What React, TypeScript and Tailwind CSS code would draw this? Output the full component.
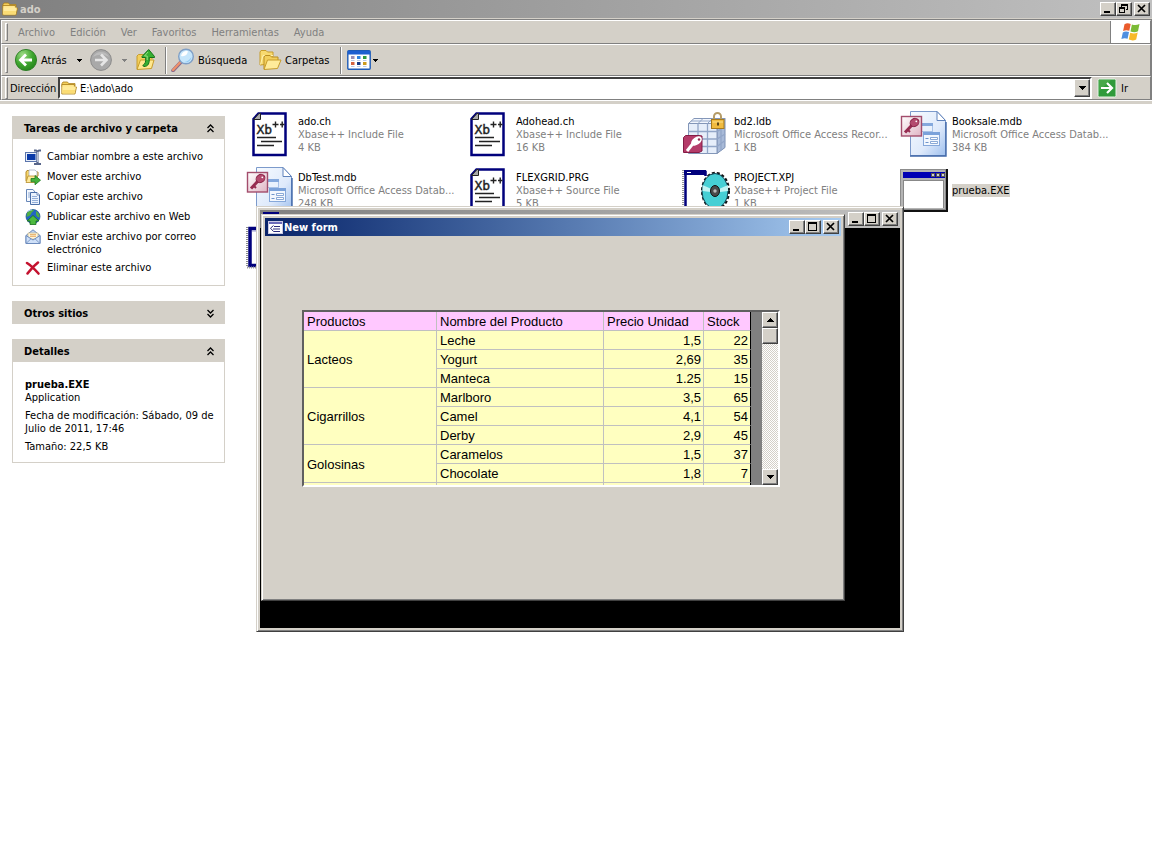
import React from 'react';

/* ---------- icons ---------- */

function FolderIcon({ className = 'h-4 w-4' }: { className?: string }) {
  return (
    <svg viewBox="0 0 16 16" className={className} aria-hidden="true">
      <path d="M1 3.500 2 2h4.500l1.200 1.600H14v3H1z" fill="#f3cf5c" stroke="#a87c18" strokeWidth=".8" />
      <path d="M.8 14V4.500h12.600V7H15.500L14 14z" fill="#ffe68c" stroke="#a87c18" strokeWidth=".8" />
      <path d="M1.500 6.500h13.200L13.400 13.300H1.500z" fill="#ffeb9c" />
      <path d="M1.500 10h12.600l-.7 3.300H1.500z" fill="#fbdc74" />
    </svg>
  );
}

function BackIcon() {
  return (
    <svg viewBox="0 0 24 24" className="h-6 w-6" aria-hidden="true">
      <defs>
        <radialGradient id="back-fill" cx=".35" cy=".25" r=".9">
          <stop offset="0" stopColor="#9fdc87" />
          <stop offset=".5" stopColor="#3fa62f" />
          <stop offset="1" stopColor="#1d7a16" />
        </radialGradient>
      </defs>
      <circle cx="12" cy="12" r="10.600" fill="url(#back-fill)" stroke="#2c7c25" strokeWidth=".9" />
      <path d="M18 12H7M12 6.500 6.500 12l5.500 5.500" fill="none" stroke="#fff" strokeWidth="2.800" />
    </svg>
  );
}

function ForwardIcon() {
  return (
    <svg viewBox="0 0 24 24" className="h-6 w-6" aria-hidden="true">
      <circle cx="12" cy="12" r="10.400" fill="#a9a9a9" stroke="#8b8b8b" />
      <path d="M4 9a9 9 0 0 1 16 0C15 6 9 6 4 9z" fill="#bcbcbc" />
      <path d="M6 12h11M12 6.500 17.500 12 12 17.500" fill="none" stroke="#e6e6e6" strokeWidth="2.600" />
    </svg>
  );
}

function UpFolderIcon() {
  return (
    <svg viewBox="0 0 22 24" className="h-6 w-[22px]" aria-hidden="true">
      <path d="M2 21V8l1.500-1.500h5L10 8h7v3" fill="#f3cf5c" stroke="#c79c2b" />
      <path d="m2 21.500 3.500-9.500h13.500L16.500 20.500z" fill="#ffe88f" stroke="#c79c2b" />
      <path d="M9 18.500c4.500 0 5.500-3.500 5.300-9H19.500v-1L13.700 1.500 7 8.500v1h3.700c.2 4-.2 6.500-3 8z" fill="#36b032" stroke="#14711a" />
      <path d="m13 4-3.500 4h2.700v4" fill="none" stroke="#95e07f" />
    </svg>
  );
}

function SearchIcon() {
  return (
    <svg viewBox="0 0 24 24" className="h-6 w-6" aria-hidden="true">
      <path d="m9.500 14.500-7.500 8" stroke="#8b6a8a" strokeWidth="3.600" strokeLinecap="round" />
      <path d="m9 14.500-7 7.500" stroke="#f0926a" strokeWidth="2.200" strokeLinecap="round" />
      <circle cx="15" cy="8.500" r="7.300" fill="#c6e6fb" stroke="#7f9fc6" strokeWidth="1.400" />
      <path d="M10 8a5.500 5.500 0 0 1 7-4.700c-1 4-3 5.500-7 4.700z" fill="#fff" />
      <path d="M20.500 9a5.500 5.500 0 0 1-7 5c3-.5 5-2 7-5z" fill="#8ec8f2" />
    </svg>
  );
}

function FoldersIcon() {
  return (
    <svg viewBox="0 0 24 24" className="h-6 w-6" aria-hidden="true">
      <path d="M2 17V4l1-1.500h5L9.500 4H15v4l-3 8z" fill="#f8da70" stroke="#c79c2b" />
      <path d="M2.500 16.500 5 7.500h10" fill="none" stroke="#fff2b0" />
      <path d="M6 21V9l1.200-1.500h5L13.500 9H20v3" fill="#f3cf5c" stroke="#b98e22" />
      <path d="m6 21.500 3.500-9.500H23l-3.500 8.500z" fill="#ffeb9a" stroke="#c79c2b" />
    </svg>
  );
}

function ViewsIcon() {
  return (
    <svg viewBox="0 0 24 20" className="h-5 w-6" aria-hidden="true">
      <rect x=".8" y=".8" width="22.400" height="18.400" rx="1" fill="#fff" stroke="#1d5bb8" strokeWidth="1.400" />
      <rect x="1" y="1" width="22" height="3.500" fill="#1d5fd0" />
      <rect x="4" y="6" width="3.500" height="3" fill="#9b8fb5" />
      <rect x="10" y="6" width="3.500" height="3" fill="#2f83e0" />
      <rect x="16" y="6" width="3.500" height="3" fill="#2f9a3e" />
      <rect x="4" y="12" width="3.500" height="3" fill="#d3623e" />
      <rect x="10" y="12" width="3.500" height="3" fill="#163a86" />
      <rect x="16" y="12" width="3.500" height="3" fill="#cc9a1e" />
      <path d="M4 10.500h3.500M10 10.500h3.500M16 10.500h3.500M4 16.500h3.500M10 16.500h3.500M16 16.500h3.500" stroke="#bccbe4" />
    </svg>
  );
}

function GoIcon() {
  return (
    <svg viewBox="0 0 20 20" className="h-5 w-5" aria-hidden="true">
      <rect x="1" y="1" width="18" height="18" rx="1.500" fill="#2f9a3a" stroke="#e8f3e6" />
      <path d="M2 2h12L2 13z" fill="#46a849" />
      <path d="M4 10h10M10 5l5 5-5 5" fill="none" stroke="#fff" strokeWidth="2.200" />
    </svg>
  );
}

function WindowsFlag() {
  return (
    <svg viewBox="0 0 22 20" className="h-5 w-[22px]" aria-hidden="true">
      <path d="M4.500 2.200c2-1.400 4-1.300 6.200-.3L9.300 8.800c-2-.8-4-.8-6.200.3z" fill="#ea5b2c" />
      <path d="M11.900 2.400c2.600 1 4.600 1 7.600-.4L18 9.200c-2.600 1.300-4.700 1.200-7.500.2z" fill="#7cbb36" />
      <path d="M2.800 10.400c2-1.200 4-1.200 6.200-.3l-1.400 6.700c-2-.8-4-.8-6.200.3z" fill="#4f8fe0" />
      <path d="M10.200 10.700c2.700 1 4.700 1 7.500-.2l-1.500 7c-2.600 1.200-4.600 1.100-7.400.1z" fill="#f7b92a" />
    </svg>
  );
}

function Triangle({ up = false }: { up?: boolean }) {
  return (
    <svg viewBox="0 0 7 4" className="h-1 w-[7px]" shapeRendering="crispEdges" aria-hidden="true">
      <path d={up ? 'M3 0h1v1h1v1h1v1h1v1H0V3h1V2h1V1h1z' : 'M0 0h7v1H6v1H5v1H4v1H3V3H2V2H1V1H0z'} fill="#000" />
    </svg>
  );
}

function SmallTriangle({ color = '#000' }: { color?: string }) {
  return (
    <svg viewBox="0 0 5 3" className="h-[3px] w-[5px]" shapeRendering="crispEdges" aria-hidden="true">
      <path d="M0 0h5v1H4v1H3v1H2V2H1V1H0z" fill={color} />
    </svg>
  );
}

function Chevrons({ down = false }: { down?: boolean }) {
  return (
    <svg viewBox="0 0 9 9" className="h-[9px] w-[9px]" aria-hidden="true">
      <path
        d={down ? 'M1.500 1l3 3 3-3M1.500 5l3 3 3-3' : 'M1.500 4l3-3 3 3M1.500 8l3-3 3 3'}
        fill="none"
        stroke="#000"
        strokeWidth="1.300"
      />
    </svg>
  );
}

function RenameIcon() {
  return (
    <svg viewBox="0 0 16 16" className="h-4 w-4" aria-hidden="true">
      <rect x=".5" y="3.500" width="11.500" height="9" fill="#e8eef8" stroke="#5b76ad" />
      <rect x="2" y="5" width="8.500" height="6" fill="#0a3aa8" />
      <path d="M9 1.500h2l1.500 1 1.500-1H16M12.500 2.500v11M9 15h2l1.500-1 1.500 1H16" fill="none" stroke="#56658a" strokeWidth="2" />
      <path d="M12.500 3v10" stroke="#cfd8ea" strokeWidth=".8" />
    </svg>
  );
}

function MoveIcon() {
  return (
    <svg viewBox="0 0 16 16" className="h-4 w-4" aria-hidden="true">
      <path d="M1 12V3l1-1.500h4L7.500 3H13v4" fill="#f6d468" stroke="#b48b2a" />
      <path d="M4 1h6l2 2v6H4z" fill="#fff" stroke="#a7b1c4" strokeWidth=".8" />
      <path d="M1 13.500 3 7h9.500L11 13.500z" fill="#ffe99a" stroke="#b48b2a" strokeWidth=".8" />
      <path d="M6 9.500h4V6.500l5.500 4.700L10 15.800v-3H6z" fill="#45b23b" stroke="#1b7a1e" strokeWidth=".8" />
    </svg>
  );
}

function CopyIcon() {
  return (
    <svg viewBox="0 0 16 16" className="h-4 w-4" aria-hidden="true">
      <path d="M1.500.5H8L10 3v9.500H1.500z" fill="#f5f9ff" stroke="#6787b8" />
      <path d="M3 4h3M3 6h3M3 8h3" stroke="#90abd4" />
      <path d="M5.500 3.500H12L14.500 6v9.500h-9z" fill="#eaf2fd" stroke="#4b6fa8" />
      <path d="M12 3.500V6h2.500" fill="#fff" stroke="#4b6fa8" strokeWidth=".8" />
      <path d="M7 7.500h5M7 9.500h6M7 11.500h6M7 13.500h6" stroke="#7c9cce" strokeWidth=".8" />
    </svg>
  );
}

function PublishIcon() {
  return (
    <svg viewBox="0 0 16 16" className="h-4 w-4" aria-hidden="true">
      <circle cx="8" cy="7.500" r="7" fill="#2265c4" stroke="#164a8f" strokeWidth=".7" />
      <path d="M2 4c2-3 5-3.500 7-3-1 2-2.500 2-3 4-1 2-3 2-4.500 3zM11 2c2 1 3.500 3 3.700 6-2 1-3-1-3.700-2.500z" fill="#4fae45" />
      <path d="M3 2.500c1-1 3-1.700 4-1.500" stroke="#a9d3f7" fill="none" />
      <path d="M8 6.500 14 12h-3v3.500H5V12H2z" fill="#4cba3f" stroke="#17701c" strokeWidth=".8" />
    </svg>
  );
}

function MailIcon() {
  return (
    <svg viewBox="0 0 16 16" className="h-4 w-4" aria-hidden="true">
      <path d="M1 6.500 8 .8l7 5.700v8H1z" fill="#bcd3f2" stroke="#6c8bbd" />
      <path d="M3 4h10v6H3z" fill="#fff6dc" stroke="#c8b582" strokeWidth=".7" />
      <path d="M5 5.700h6M5 7.300h6" stroke="#e6a95f" />
      <path d="M1 6.500 8 11l7-4.500v8H1z" fill="#cfe0f8" stroke="#6c8bbd" />
      <path d="m1 14.500 5-4.700M15 14.500l-5-4.700" stroke="#6c8bbd" strokeWidth=".8" />
    </svg>
  );
}

function DeleteIcon() {
  return (
    <svg viewBox="0 0 16 16" className="h-4 w-4" aria-hidden="true">
      <path d="M2 3c4 2.500 7.500 6 11.500 10.500M13 2.500C9 5.500 5.500 9.500 2.500 13.500" fill="none" stroke="#c4122f" strokeWidth="2.600" strokeLinecap="round" />
    </svg>
  );
}

/* ---------- file type icons, 48px ---------- */

function XbaseIcon() {
  return (
    <svg viewBox="0 0 48 48" className="h-12 w-12" aria-hidden="true">
      <path d="M12.500 3.500h27v41.500H7.500V9z" fill="#fff" stroke="#00007c" strokeWidth="2.500" />
      <path d="M7.500 9.500 13 3.500h1.500v6z" fill="#a8a8a8" stroke="#222" />
      <text x="10.500" y="24" fontFamily="DejaVu Sans Mono, monospace" fontSize="13" stroke="#222" strokeWidth=".4" fill="#222">
        Xb
      </text>
      <path d="M26.500 14.500h6M29.500 11.500v6M34 14.500h4.500M36.200 11.500v6" stroke="#222" strokeWidth="1.400" />
      <path d="M11 27.500h19M15 31.500h21M11 35.500h17" stroke="#222" strokeWidth="1.400" />
    </svg>
  );
}

function AccessIcon() {
  return (
    <svg viewBox="0 0 48 48" className="h-12 w-12" aria-hidden="true">
      <defs>
        <linearGradient id="access-page" x1="0" y1="0" x2="1" y2="1">
          <stop offset="0" stopColor="#f7fbff" />
          <stop offset=".6" stopColor="#dfeafb" />
          <stop offset="1" stopColor="#9fc0ee" />
        </linearGradient>
        <linearGradient id="access-key" x1="0" y1="0" x2="1" y2="1">
          <stop offset="0" stopColor="#fff" />
          <stop offset="1" stopColor="#dfb4c4" />
        </linearGradient>
      </defs>
      <path d="M10.500 1.500H37l8.500 9v35h-35z" fill="url(#access-page)" stroke="#7c9acb" />
      <path d="M37 1.500v9h8.500z" fill="#fff" stroke="#5f82bb" />
      <path d="M10 46h36V12" fill="none" stroke="#3f67a8" strokeWidth="1.400" />
      <rect x="20.500" y="13.500" width="12" height="8" fill="#eaf2fd" stroke="#a9c2e7" />
      <path d="M20 14.500h13" stroke="#85a9dd" strokeWidth="3" />
      <rect x="23.500" y="22.500" width="16" height="13" fill="#f2f7fe" stroke="#86a8da" />
      <path d="M23 23.500h17" stroke="#7ba2da" strokeWidth="3" />
      <path d="M25.500 28.500h3M25.500 32.500h3" stroke="#6f94cb" />
      <path d="M30.500 27.500h7v2h-7zM30.500 31.500h7v2h-7z" fill="#fff" stroke="#6f94cb" strokeWidth=".8" />
      <rect x="1.500" y="6.500" width="20" height="19.500" fill="url(#access-key)" stroke="#a34d6c" strokeWidth="1.400" />
      <path d="m13 14-8 8.500" stroke="#962b50" strokeWidth="3" />
      <path d="m8 20 2 2" stroke="#962b50" strokeWidth="2" />
      <ellipse cx="14.500" cy="12.500" rx="4.600" ry="3.900" fill="#b44a6e" stroke="#8b2347" transform="rotate(-35 14.500 12.500)" />
      <circle cx="16.300" cy="11.300" r=".9" fill="#fff" />
    </svg>
  );
}

function AccessLockIcon() {
  return (
    <svg viewBox="0 0 48 48" className="h-12 w-12" aria-hidden="true">
      <path d="M6.500 13.500 12 8.500h31l-4 5z" fill="#f2f6fd" stroke="#8396b8" />
      <path d="M35 13.500 43 8.500v29l-8 6z" fill="#a8bad8" stroke="#7c90b4" />
      <path d="M6.500 13.500H35v30H6.500z" fill="#e6eefa" stroke="#8396b8" />
      <path d="M16 13.500v30M25.500 13.500v30M39 11.500v29M6.500 21.500H35l8-5M6.500 29H35l8-5M6.500 36.500H35l8-6" fill="none" stroke="#92a6c8" strokeWidth="1.300" />
      <path d="m16 13.500 5-5M25.500 13.500l5-5M9 11h29" stroke="#92a6c8" />
      <path d="M32 11V6.500a3.500 3.500 0 0 1 7 0V11" fill="none" stroke="#b59c68" strokeWidth="2" />
      <rect x="29.500" y="9.500" width="12.500" height="9" fill="#f0bb3f" stroke="#a87b1c" />
      <path d="M30.500 12h10.500" stroke="#fbe08d" />
      <path d="M36 12.500v3" stroke="#4c3a10" strokeWidth="1.800" />
      <path d="M3.500 25.500H17l3 .5v15l-3 1.500H1.500v-15z" fill="#b43b69" stroke="#841c45" />
      <path d="m13 31-8 10" stroke="#fff" strokeWidth="3" />
      <ellipse cx="14.500" cy="31" rx="6" ry="3.800" fill="#fff" transform="rotate(-35 14.500 31)" />
      <circle cx="17" cy="29.500" r="1.200" fill="#962b50" />
    </svg>
  );
}

function ProjectIcon() {
  return (
    <svg viewBox="0 0 48 48" className="h-12 w-12" aria-hidden="true">
      <path d="M1 4v40" stroke="#9a9a9a" strokeWidth="2" strokeDasharray="1 1" />
      <path d="M3.500 6h20v38h-20z" fill="#fff" stroke="#00007c" strokeWidth="2.500" />
      <path d="M22 10h5v30h-5z" fill="#fff" />
      <path d="M2 6.500h22" stroke="#00007c" strokeWidth="5" />
      <path d="M5 6.500h4" stroke="#fff" />
      <ellipse cx="33.500" cy="25" rx="13.300" ry="18" fill="none" stroke="#111" strokeWidth="2.400" strokeDasharray="3 2" />
      <ellipse cx="33" cy="25" rx="13" ry="17.500" fill="#46cfd4" stroke="#114455" />
      <path d="m20.500 19 9 4-1 3-8-1zM46 19l-9 4 1 3 8-1z" fill="#bff3f3" />
      <ellipse cx="33" cy="25" rx="4.500" ry="5.500" fill="#4a4a4a" stroke="#111" />
      <circle cx="33" cy="25" r="1.700" fill="#b9b9b9" />
    </svg>
  );
}

function ExeIcon() {
  return (
    <svg viewBox="0 0 48 48" className="h-12 w-12" shapeRendering="crispEdges" aria-hidden="true">
      <rect x="0" y="3" width="48" height="43" fill="#111" />
      <rect x="0" y="3" width="46" height="41" fill="#8c8c8c" />
      <rect x="1" y="4" width="44" height="39" fill="#b4b4b4" />
      <rect x="3" y="6" width="42" height="6" fill="#0000b4" />
      <path d="M31 7h4v4h-4zM36 7h4v4h-4zM41 7h4v4h-4z" fill="#555" />
      <path d="M32 8h2v2h-2zM37 8h2v2h-2zM42 8h2v2h-2z" fill="#d0d0d0" />
      <rect x="3" y="14" width="41" height="28" fill="#888" />
      <rect x="4" y="15" width="39" height="27" fill="#fff" />
    </svg>
  );
}

function WindowFileIcon() {
  return (
    <svg viewBox="0 0 48 48" className="h-12 w-12" aria-hidden="true">
      <path d="M1 5v40" stroke="#8c8c8c" strokeWidth="2" strokeDasharray="1 1" />
      <path d="M4 6.500h40v37H4z" fill="#fff" stroke="#00007c" strokeWidth="3.500" />
      <path d="M6 9h5" stroke="#9a9ad0" />
      <path d="M1 45.500h44" stroke="#9a9a9a" strokeWidth="2" strokeDasharray="1 1" />
    </svg>
  );
}

function FormIcon() {
  return (
    <svg viewBox="0 0 15 13" className="h-[13px] w-[15px]" aria-hidden="true">
      <rect x=".5" y=".5" width="14" height="12" fill="#fff" stroke="#c9c9e4" />
      <path d="M1 2h13" stroke="#2b2b9c" strokeWidth="1.400" />
      <path d="M5.500 4.500 2.500 7.200l3 3.300h6.500" fill="none" stroke="#2b2b7c" />
      <path d="M6 5.500h6M5 8h7" stroke="#2b2b7c" />
    </svg>
  );
}

/* ---------- window chrome ---------- */

const RAISED =
  'border border-t-white border-l-white border-r-[#404040] border-b-[#404040] bg-[#d4d0c8] shadow-[inset_-1px_-1px_0_#808080]';

type CaptionKind = 'minimize' | 'maximize' | 'restore' | 'close';

const captionPaths: Record<CaptionKind, React.ReactNode> = {
  minimize: <path d="M3 8h6v2H3z" fill="#000" />,
  maximize: <path d="M2 1h9v9H2zM3 3v6h7V3z" fill="#000" fillRule="evenodd" />,
  restore: (
    <path d="M4 1h7v6H9V6h1V3H5v1H4zM2 4h6v6H2zM3 6v3h4V6z" fill="#000" fillRule="evenodd" />
  ),
  close: <path d="m3 2 7 7M10 2 3 9" stroke="#000" strokeWidth="1.700" />,
};

const captionLabels: Record<CaptionKind, string> = {
  minimize: 'Minimizar',
  maximize: 'Maximizar',
  restore: 'Restaurar',
  close: 'Cerrar',
};

function CaptionButton({ kind }: { kind: CaptionKind }) {
  return (
    <button type="button" aria-label={captionLabels[kind]} className={`flex h-3.5 w-4 shrink-0 ${RAISED}`}>
      <svg viewBox="0 0 14 12" className="h-3 w-3.5" aria-hidden="true">
        {captionPaths[kind]}
      </svg>
    </button>
  );
}

function CaptionButtons({ restore = false }: { restore?: boolean }) {
  return (
    <div className="ml-auto flex items-center pr-0.5">
      <CaptionButton kind="minimize" />
      <CaptionButton kind={restore ? 'restore' : 'maximize'} />
      <span className="w-0.5" />
      <CaptionButton kind="close" />
    </div>
  );
}

function Grip() {
  return <span className="h-full w-[3px] shrink-0 border border-t-white border-l-white border-r-[#808080] border-b-[#808080]" />;
}

function Separator() {
  return <span className="h-[27px] w-0.5 shrink-0 border-l border-r border-l-[#808080] border-r-white" />;
}

const BAND = 'flex items-center border border-t-white border-l-white border-r-[#808080] border-b-[#808080]';

/* ---------- explorer ---------- */

const menus = ['Archivo', 'Edición', 'Ver', 'Favoritos', 'Herramientas', 'Ayuda'];

function Explorer() {
  return (
    <header className="bg-[#d4d0c8]">
      <div className="flex h-[18px] items-center bg-linear-to-r from-[#808080] to-[#c0c0c0] pl-0.5">
        <FolderIcon />
        <h1 className="pl-0.5 text-[11px] font-bold text-[#d4d0c8]">ado</h1>
        <CaptionButtons restore />
      </div>

      <div className="mt-px border-t border-r border-l border-t-[#808080] border-r-[#808080] border-l-[#808080]">
        <div className={`${BAND} h-6`}>
          <nav className="flex h-full flex-1 items-center py-0.5 pl-[3px]">
            <Grip />
            <div className="flex items-center gap-[15px] pl-2.5 text-[#808080]">
              {menus.map((m) => (
                <button key={m} type="button">
                  {m}
                </button>
              ))}
            </div>
          </nav>
          <div className="flex h-full w-10 items-center justify-center border-l border-l-[#808080] bg-white">
            <WindowsFlag />
          </div>
        </div>

        <div className={`${BAND} h-8 py-0.5 pl-[3px]`}>
          <Grip />
          <button type="button" className="ml-1.5 flex w-[68px] shrink-0 items-center gap-[3px]">
            <BackIcon />
            Atrás
            <span className="ml-auto">
              <SmallTriangle />
            </span>
          </button>
          <button type="button" aria-label="Adelante" className="ml-[7px] flex w-[38px] shrink-0 items-center justify-between">
            <ForwardIcon />
            <SmallTriangle color="#808080" />
          </button>
          <button type="button" aria-label="Arriba" className="mx-2 shrink-0">
            <UpFolderIcon />
          </button>
          <Separator />
          <button type="button" className="ml-1 flex w-[87px] shrink-0 items-center gap-[3px]">
            <SearchIcon />
            Búsqueda
          </button>
          <button type="button" className="flex w-[82px] shrink-0 items-center gap-[3px]">
            <FoldersIcon />
            Carpetas
          </button>
          <Separator />
          <button type="button" aria-label="Vistas" className="ml-[5px] flex items-center gap-0.5">
            <ViewsIcon />
            <SmallTriangle />
          </button>
        </div>

        <div className={`${BAND} h-6 pl-[3px]`}>
          <Grip />
          <label htmlFor="address" className="w-[50px] shrink-0 pl-0.5">
            Dirección
          </label>
          <div className="flex h-[22px] flex-1 items-center border-2 border-t-[#404040] border-r-white border-b-white border-l-[#404040] bg-white pl-px">
            <FolderIcon />
            <input id="address" defaultValue="E:\ado\ado" className="min-w-0 flex-1 bg-transparent pl-[3px] outline-none" />
            <button type="button" aria-label="Mostrar direcciones" className={`flex h-[18px] w-4 items-center justify-center ${RAISED}`}>
              <Triangle />
            </button>
          </div>
          <button type="button" className="flex w-[58px] items-center gap-1 pl-[5px]">
            <GoIcon />
            Ir
          </button>
        </div>
      </div>
      <div className="h-1 border-t border-t-white" />
    </header>
  );
}

interface PanelProps {
  title: string;
  collapsed?: boolean;
  children?: React.ReactNode;
}

function Panel({ title, collapsed = false, children }: PanelProps) {
  return (
    <section>
      <h2>
        <button
          type="button"
          aria-expanded={!collapsed}
          className="flex h-[23px] w-full items-center justify-between bg-[#d4d0c8] pt-0.5 pr-2.5 pl-3 font-bold"
        >
          {title}
          <Chevrons down={collapsed} />
        </button>
      </h2>
      {children && <div className="border-x border-b border-[#d4d0c8] pr-1 pb-[9px] pl-3">{children}</div>}
    </section>
  );
}

const tasks = [
  { icon: <RenameIcon />, label: 'Cambiar nombre a este archivo' },
  { icon: <MoveIcon />, label: 'Mover este archivo' },
  { icon: <CopyIcon />, label: 'Copiar este archivo' },
  { icon: <PublishIcon />, label: 'Publicar este archivo en Web' },
  { icon: <MailIcon />, label: 'Enviar este archivo por correo electrónico' },
  { icon: <DeleteIcon />, label: 'Eliminar este archivo' },
];

function Sidebar() {
  return (
    <aside className="flex w-[213px] shrink-0 flex-col gap-[15px]">
      <Panel title="Tareas de archivo y carpeta">
        <ul className="flex flex-col gap-1 pt-2.5">
          {tasks.map((t) => (
            <li key={t.label}>
              <a href="#" className="flex items-start gap-1.5">
                <span className="shrink-0">{t.icon}</span>
                <span className="max-w-40 pt-px">{t.label}</span>
              </a>
            </li>
          ))}
        </ul>
      </Panel>
      <Panel title="Otros sitios" collapsed />
      <Panel title="Detalles">
        <div className="flex flex-col gap-[5px] pt-4">
          <p>
            <b>prueba.EXE</b>
            <br />
            Application
          </p>
          <p>Fecha de modificación: Sábado, 09 de Julio de 2011, 17:46</p>
          <p>Tamaño: 22,5 KB</p>
        </div>
      </Panel>
    </aside>
  );
}

const files = [
  { name: 'ado.ch', type: 'Xbase++ Include File', size: '4 KB', icon: <XbaseIcon /> },
  { name: 'Adohead.ch', type: 'Xbase++ Include File', size: '16 KB', icon: <XbaseIcon /> },
  { name: 'bd2.ldb', type: 'Microsoft Office Access Recor...', size: '1 KB', icon: <AccessLockIcon /> },
  { name: 'Booksale.mdb', type: 'Microsoft Office Access Datab...', size: '384 KB', icon: <AccessIcon /> },
  { name: 'DbTest.mdb', type: 'Microsoft Office Access Datab...', size: '248 KB', icon: <AccessIcon /> },
  { name: 'FLEXGRID.PRG', type: 'Xbase++ Source File', size: '5 KB', icon: <XbaseIcon /> },
  { name: 'PROJECT.XPJ', type: 'Xbase++ Project File', size: '1 KB', icon: <ProjectIcon /> },
  { name: 'prueba.EXE', type: '', size: '', icon: <ExeIcon />, selected: true },
  { name: '', type: '', size: '', icon: <WindowFileIcon /> },
];

function FileList() {
  return (
    <main className="grid flex-1 auto-rows-[48px] grid-cols-[repeat(auto-fill,218px)] content-start gap-y-2">
      {files.map((f) => (
        <div key={f.name} className="flex items-center gap-1">
          <span className="shrink-0">{f.icon}</span>
          <div className="whitespace-nowrap text-[#808080]">
            <p>
              <span className={f.selected ? 'bg-[#d4d0c8] text-black' : 'text-black'}>{f.name}</span>
            </p>
            {f.type && <p>{f.type}</p>}
            {f.size && <p>{f.size}</p>}
          </div>
        </div>
      ))}
    </main>
  );
}

/* ---------- form with the product grid ---------- */

const groups = [
  { name: 'Lacteos', rows: [['Leche', '1,5', '22'], ['Yogurt', '2,69', '35'], ['Manteca', '1.25', '15']] },
  { name: 'Cigarrillos', rows: [['Marlboro', '3,5', '65'], ['Camel', '4,1', '54'], ['Derby', '2,9', '45']] },
  { name: 'Golosinas', rows: [['Caramelos', '1,5', '37'], ['Chocolate', '1,8', '7']] },
  { name: '', rows: [['', '', '']] },
];

const CELL = 'h-[19px] border-r border-b border-[#c0c0c0] p-0 pt-0.5 pl-[3px]';

function ProductGrid() {
  return (
    <div className="flex h-[177px] w-[478px] overflow-hidden border-2 border-t-[#606060] border-r-white border-b-white border-l-[#606060] bg-[#808080] font-['Liberation_Sans',Arial,sans-serif] text-[13px] leading-4">
      <table className="w-[447px] shrink-0 table-fixed border-separate border-spacing-0 self-start bg-[#ffffc0] text-left">
        <colgroup>
          <col className="w-[133px]" />
          <col className="w-[167px]" />
          <col className="w-[100px]" />
          <col className="w-[47px]" />
        </colgroup>
        <thead className="bg-[#ffc8ff]">
          <tr>
            {['Productos', 'Nombre del Producto', 'Precio Unidad'].map((h) => (
              <th key={h} scope="col" className={`${CELL} font-normal`}>
                {h}
              </th>
            ))}
            <th scope="col" className={`${CELL} border-r-black font-normal`}>
              Stock
            </th>
          </tr>
        </thead>
        <tbody>
          {groups.map((g) =>
            g.rows.map((r, i) => (
              <tr key={`${g.name}-${r[0]}`}>
                {i === 0 && (
                  <th scope="rowgroup" rowSpan={g.rows.length} className={`${CELL} font-normal`}>
                    {g.name}
                  </th>
                )}
                <td className={CELL}>{r[0]}</td>
                <td className={`${CELL} pr-0.5 text-right`}>{r[1]}</td>
                <td className={`${CELL} border-r-black pr-0.5 text-right`}>{r[2]}</td>
              </tr>
            )),
          )}
        </tbody>
      </table>
      <div className="ml-auto flex w-4 flex-col bg-[repeating-conic-gradient(#fff_0_25%,#d4d0c8_0_50%)] bg-[length:2px_2px]">
        <button type="button" aria-label="Desplazar arriba" className={`flex h-4 items-center justify-center ${RAISED}`}>
          <Triangle up />
        </button>
        <div className={`h-4 ${RAISED}`} />
        <button type="button" aria-label="Desplazar abajo" className={`mt-auto flex h-4 items-center justify-center ${RAISED}`}>
          <Triangle />
        </button>
      </div>
    </div>
  );
}

const FRAME =
  'border border-t-[#d4d0c8] border-l-[#d4d0c8] border-r-[#404040] border-b-[#404040] bg-[#d4d0c8] p-[3px] shadow-[inset_1px_1px_0_#fff,inset_-1px_-1px_0_#808080]';

function ConsoleWindow() {
  return (
    <div className={`absolute top-[206px] left-64 flex h-[426px] w-[648px] flex-col ${FRAME}`}>
      <div className="flex h-[18px] items-start bg-linear-to-r from-[#808080] to-[#c0c0c0] pt-0.5 pl-[3px]">
        <span className="h-4 w-4 bg-[#00007c]" />
        <CaptionButtons />
      </div>
      <div className="flex-1 bg-black" />
    </div>
  );
}

function FormWindow() {
  return (
    <div className={`absolute top-[214px] left-[261px] flex h-[387px] w-[584px] flex-col ${FRAME}`}>
      <div className="flex h-[18px] items-center bg-linear-to-r from-[#0a246a] to-[#a6caf0] pl-[3px]">
        <FormIcon />
        <h2 className="pl-px font-bold text-white">New form</h2>
        <CaptionButtons />
      </div>
      <div className="flex flex-1 items-start px-[37px] pt-[74px]">
        <ProductGrid />
      </div>
    </div>
  );
}

export default function App() {
  return (
    <div className="relative min-h-screen bg-white font-['Tahoma','DejaVu_Sans_Condensed',sans-serif] text-[11px] leading-[13px] text-black">
      <Explorer />
      <div className="flex gap-[21px] pl-3">
        <div className="pt-3">
          <Sidebar />
        </div>
        <div className="flex flex-1 pt-1.5">
          <FileList />
        </div>
      </div>
      <ConsoleWindow />
      <FormWindow />
    </div>
  );
}
